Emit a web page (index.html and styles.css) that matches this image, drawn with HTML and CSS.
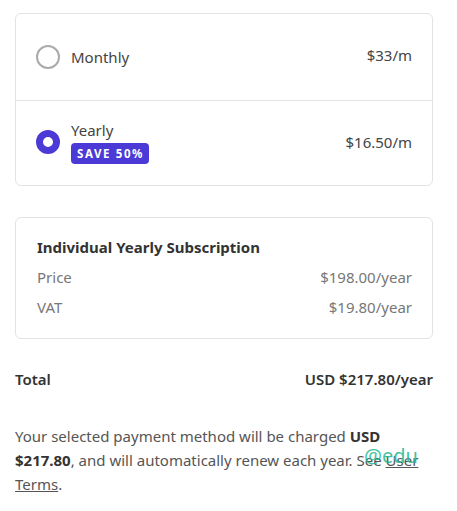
FILE: index.html
```html
<!DOCTYPE html>
<html>
<head>
<meta charset="utf-8">
<link rel="stylesheet" href="styles.css">
</head>
<body>
<div class="page">
  <div class="card plans">
    <div class="plan">
      <span class="radio"></span>
      <div class="plan-info"><span class="plan-name">Monthly</span></div>
      <span class="plan-price">$33/m</span>
    </div>
    <div class="plan selected">
      <span class="radio checked"></span>
      <div class="plan-info">
        <span class="plan-name">Yearly</span>
        <span class="badge">SAVE 50%</span>
      </div>
      <span class="plan-price">$16.50/m</span>
    </div>
  </div>

  <div class="card summary">
    <div class="summary-title">Individual Yearly Subscription</div>
    <div class="line"><span>Price</span><span>$198.00/year</span></div>
    <div class="line"><span>VAT</span><span>$19.80/year</span></div>
  </div>

  <div class="total"><span>Total</span><span>USD $217.80/year</span></div>

  <p class="note">Your selected payment method will be charged <b>USD $217.80</b>, and will automatically renew each year. See <a href="#">User Terms</a>.</p>
  <span class="watermark">@edu</span>
</div>
</body>
</html>
```
FILE: styles.css
```css
* { box-sizing: border-box; }
html, body { margin: 0; padding: 0; background: #fff; }
body {
  font-family: "Noto Sans", "Open Sans", sans-serif;
  color: #333;
}
.page {
  position: relative;
  padding: 13px 24px 0 15px;
  width: 457px;
}
.card {
  border: 1px solid #e3e3e3;
  border-radius: 6px;
  background: #fff;
}
.plan {
  display: flex;
  align-items: center;
  padding: 0 20px 0 20px;
  height: 86px;
}
.plan + .plan {
  border-top: 1px solid #e3e3e3;
  height: 85px;
}
.radio {
  width: 24px;
  height: 24px;
  border-radius: 50%;
  border: 2px solid #aaa;
  flex: none;
  margin-right: 11px;
}
.radio.checked {
  border: 7px solid #4b3ad6;
  margin-top: -2px;
}
.plan-info {
  flex: 1;
  display: flex;
  flex-direction: column;
  align-items: flex-start;
}
.plan-name {
  font-size: 15px;
  color: #444;
  line-height: 20px;
}
.plan-price {
  font-size: 15px;
  color: #444;
  margin-top: -4px;
}
.selected .plan-price { margin-top: -2px; }
.selected .plan-info { margin-top: -3px; }
.badge {
  margin-top: 3px;
  background: #4b3ad6;
  color: #fff;
  font-size: 11.5px;
  font-weight: 700;
  letter-spacing: 1.6px;
  border-radius: 4px;
  padding: 1px 5px 1px 6px;
  line-height: 19px;
}
.summary {
  margin-top: 31px;
  padding: 17px 20px 16px 21px;
}
.summary-title {
  font-weight: 700;
  font-size: 15px;
  color: #333;
  line-height: 24px;
  margin-bottom: 3px;
}
.line {
  display: flex;
  justify-content: space-between;
  font-size: 15px;
  color: #777;
  line-height: 30px;
}
.total {
  margin-top: 28px;
  display: flex;
  justify-content: space-between;
  font-size: 15px;
  font-weight: 600;
  color: #333;
  line-height: 24px;
}
.note {
  margin: 33px 0 0 0;
  font-size: 15px;
  line-height: 24px;
  color: #555;
}
.note b { color: #333; }
.note a { color: #555; text-decoration: underline; }
.watermark {
  position: absolute;
  left: 364px;
  top: 442px;
  font-size: 20px;
  color: #1fb893;
  opacity: 0.85;
}
```
